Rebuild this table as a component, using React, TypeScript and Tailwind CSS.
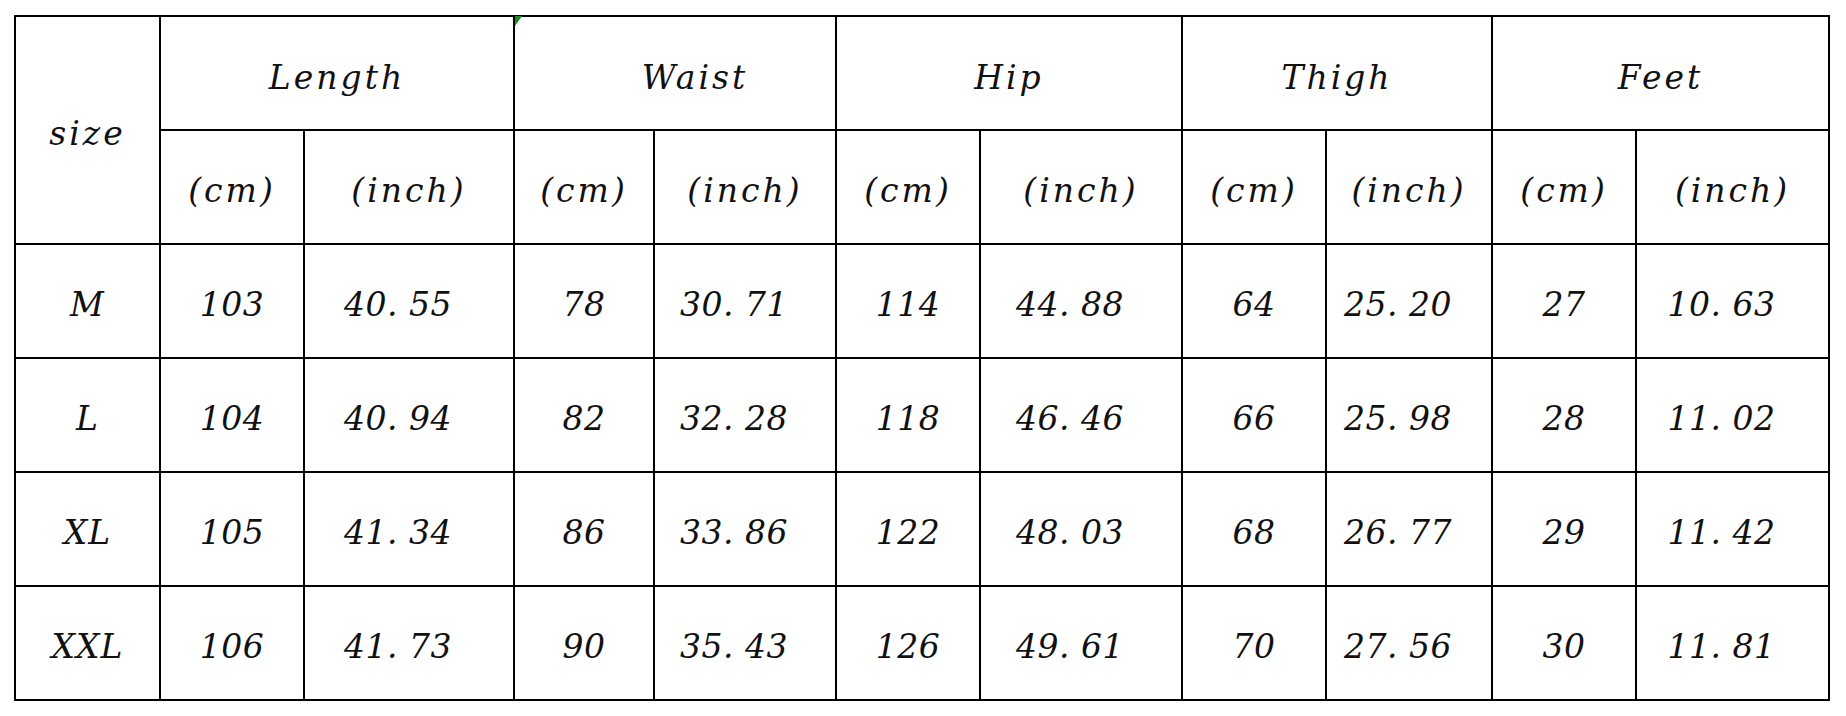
const widths = [145, 144, 210, 140, 182, 144, 202, 144, 166, 144, 193];

const groups = ['Length', 'Waist', 'Hip', 'Thigh', 'Feet'];

const rows = [
  { size: 'M', values: ['103', '40. 55', '78', '30. 71', '114', '44. 88', '64', '25. 20', '27', '10. 63'] },
  { size: 'L', values: ['104', '40. 94', '82', '32. 28', '118', '46. 46', '66', '25. 98', '28', '11. 02'] },
  { size: 'XL', values: ['105', '41. 34', '86', '33. 86', '122', '48. 03', '68', '26. 77', '29', '11. 42'] },
  { size: 'XXL', values: ['106', '41. 73', '90', '35. 43', '126', '49. 61', '70', '27. 56', '30', '11. 81'] },
];

const cell = 'border-2 border-black text-center align-middle p-0';

export default function App() {
  return (
    <div className="w-[1846px] h-[716px] bg-white overflow-hidden">
      <div className="relative ml-[14px] pt-[15px] w-[1816px]">
        <table
          className="w-[1816px] table-fixed border-collapse text-[#111] italic text-[33px] leading-none"
          style={{ fontFamily: '"DejaVu Serif", "Liberation Serif", serif' }}
        >
          <colgroup>
            {widths.map((w, i) => (
              <col key={i} style={{ width: w }} />
            ))}
          </colgroup>
          <thead>
            <tr className="h-[114px]">
              <th rowSpan={2} className={`${cell} font-normal tracking-[3px] pt-[7px]`}>
                size
              </th>
              {groups.map((g) => (
                <th
                  key={g}
                  colSpan={2}
                  className={`${cell} font-normal tracking-[3px] pt-[8px] ${g === 'Waist' ? 'pl-[40px]' : ''}`}
                >
                  {g}
                </th>
              ))}
            </tr>
            <tr className="h-[114px]">
              {groups.map((g) => [
                <th key={g + 'cm'} className={`${cell} font-normal tracking-[3px] pt-[7px]`}>
                  (cm)
                </th>,
                <th key={g + 'in'} className={`${cell} font-normal tracking-[3px] pt-[7px]`}>
                  (inch)
                </th>,
              ])}
            </tr>
          </thead>
          <tbody>
            {rows.map((r) => (
              <tr key={r.size} className="h-[114px]">
                <td className={`${cell} tracking-[1px] pt-[7px]`}>{r.size}</td>
                {r.values.map((v, i) => (
                  <td key={i} className={`${cell} tracking-[0.5px] pt-[7px] ${i % 2 === 1 ? 'pr-[22px]' : ''}`}>
                    {v}
                  </td>
                ))}
              </tr>
            ))}
          </tbody>
        </table>
        {/* little green comment marker at the Length/Waist corner */}
        <div className="absolute left-[501px] top-[16px] w-0 h-0 border-t-[10px] border-t-[#1f8a1f] border-r-[7px] border-r-transparent" />
      </div>
    </div>
  );
}
